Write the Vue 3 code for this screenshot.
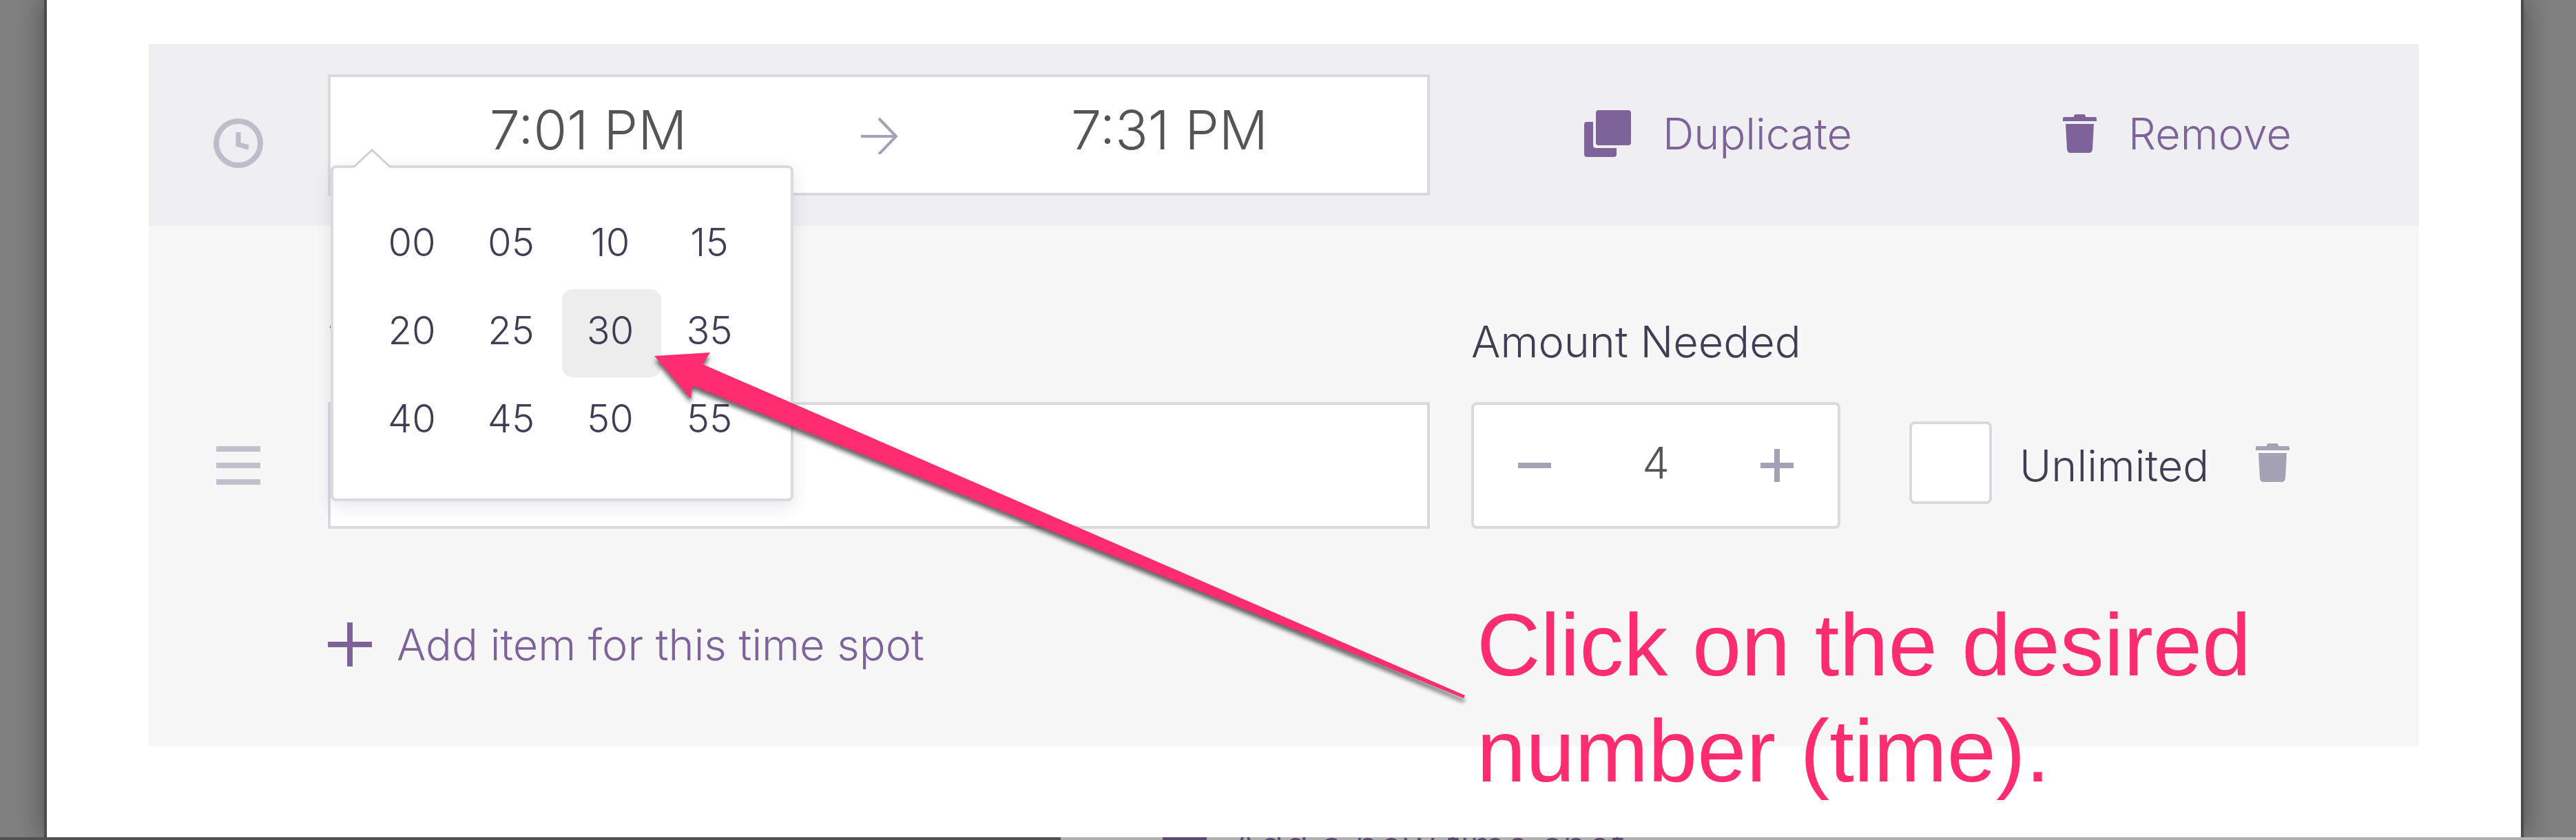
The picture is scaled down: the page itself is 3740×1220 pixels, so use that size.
<template>
  <div class="page">
    <main class="dialog">
      <section class="slot">
        <div class="slot-header">
          <div class="gutter clock">
            <svg width="72" height="72" viewBox="0 0 72 72" aria-hidden="true">
              <circle cx="36" cy="36" r="32" fill="none" stroke="#bfbdc9" stroke-width="8" />
              <path d="M36 20v18l15 4" fill="none" stroke="#bfbdc9" stroke-width="7" />
            </svg>
          </div>

          <div class="time-range">
            <input v-model="start" class="time" type="text" aria-label="Start time">
            <svg class="range-arrow" width="96" height="56" viewBox="0 0 96 56" aria-hidden="true">
              <path d="M22 30h50M48 4l25 26l-25 26" fill="none" stroke="#a5a1b5" stroke-width="4" />
            </svg>
            <input v-model="end" class="time" type="text" aria-label="End time">

            <div class="minutes">
              <svg class="caret" width="56" height="28" viewBox="0 0 56 28" aria-hidden="true">
                <path d="M0 28L28 2L56 28z" fill="#fff" />
                <path d="M1 27L28 2L55 27" fill="none" stroke="#cfcfcf" stroke-width="3" />
              </svg>
              <button
                v-for="m in minutes"
                :key="m"
                type="button"
                class="minute"
                :class="{ active: m === hovered }"
                @mouseenter="hovered = m"
                @click="pick(m)"
              >{{ m }}</button>
            </div>
          </div>

          <div class="actions">
            <button type="button" class="action">
              <svg width="68" height="68" viewBox="0 0 68 68" fill="#7d6399" aria-hidden="true">
                <rect x="17" y="0" width="51" height="51" rx="4" />
                <path d="M4 17h9v34a4 4 0 0 0 4 4h30v9a4 4 0 0 1-4 4H4a4 4 0 0 1-4-4V21a4 4 0 0 1 4-4z" />
              </svg>
              Duplicate
            </button>
            <button type="button" class="action">
              <svg width="49" height="56" viewBox="0 0 49 56" fill="#7d6399" aria-hidden="true">
                <path :d="trash" />
              </svg>
              Remove
            </button>
          </div>
        </div>

        <div class="slot-body">
          <div class="item">
            <div class="gutter handle">
              <svg width="64" height="56" viewBox="0 0 64 56" fill="#c1bfcb" aria-hidden="true">
                <path d="M0 0h64v8H0zM0 24h64v8H0zM0 48h64v8H0z" />
              </svg>
            </div>

            <div class="field title-field">
              <label for="title">Title</label>
              <input id="title" v-model="title" class="title" type="text">
            </div>

            <div class="field amount-field">
              <label for="amount">Amount Needed</label>
              <div class="stepper">
                <button type="button" aria-label="Less" @click="amount = Math.max(1, amount - 1)">
                  <svg width="48" height="48" viewBox="0 0 48 48" fill="#a5a1b5"><path d="M0 20h48v8H0z" /></svg>
                </button>
                <input id="amount" v-model.number="amount" type="text">
                <button type="button" aria-label="More" @click="amount++">
                  <svg width="48" height="48" viewBox="0 0 48 48" fill="#a5a1b5"><path d="M0 20h20V0h8v20h20v8H28v20h-8V28H0z" /></svg>
                </button>
              </div>
            </div>

            <div class="extras">
              <input id="unlimited" v-model="unlimited" type="checkbox">
              <label for="unlimited">Unlimited</label>
              <button type="button" class="delete" aria-label="Delete item">
                <svg width="49" height="56" viewBox="0 0 49 56" fill="#a5a1b5">
                  <path :d="trash" />
                </svg>
              </button>
            </div>
          </div>

          <button type="button" class="add">
            <svg width="64" height="64" viewBox="0 0 64 64" fill="#7d6399" aria-hidden="true">
              <path d="M0 28h28V0h8v28h28v8H36v28h-8V36H0z" />
            </svg>
            Add item for this time spot
          </button>
        </div>
      </section>

      <!-- callout pointing at the highlighted minute -->
      <svg class="pointer" width="1192" height="520" viewBox="0 0 1192 520" aria-hidden="true">
        <path d="M6 7L87 2L76 19L1183 500L1181 504L61 50L59 69z" fill="#ff2d6f" />
      </svg>
      <p class="callout">Click on the desired<br>number (time).</p>
    </main>

    <!-- sliver of the page behind the dialog -->
    <footer class="behind">
      <div class="behind-shade"></div>
      <div class="behind-link">
        <span class="behind-plus"></span>
        <span>Add a new time spot</span>
      </div>
    </footer>
  </div>
</template>

<script setup>
import { ref } from 'vue';

const start = ref('7:01 PM');
const end = ref('7:31 PM');
const title = ref('');
const amount = ref(4);
const unlimited = ref(false);
const hovered = ref('30');

const minutes = ['00', '05', '10', '15', '20', '25', '30', '35', '40', '45', '50', '55'];

const trash = 'M2 4h14q0-4 3-4h11q3 0 3 4h14q2 0 2 2v4H0V6q0-2 2-2zM4 14h41l-2 37q-1 5-5 5H11q-4 0-5-5z';

const pick = (m) => {
  start.value = start.value.replace(/:\d\d/, ':' + m);
};
</script>

<style>
body {
  background: #808080;
}
</style>

<style scoped>
.page {
  font-family: Inter, "Liberation Sans", sans-serif;
  font-weight: 300;
  font-size: 63px;
  line-height: 80px;
  color: #423c54;
  overflow: hidden;
}
.page * {
  box-sizing: border-box;
}
button,
input {
  font: inherit;
  color: inherit;
  margin: 0;
  padding: 0;
  border: 0;
  background: none;
}
button {
  cursor: pointer;
}
svg {
  display: block;
  flex: none;
}
.dialog {
  position: relative;
  margin: 0 80px 0 68px;
  padding: 64px 148px 132px;
  background: #fff;
  box-shadow: 0 0 0 4px #4b4b4b, 0 0 40px 4px rgba(0, 0, 0, 0.4);
}
.slot {
  background: #f7f7f7;
}
.slot-header {
  display: flex;
  padding: 44px 184px 44px 0;
  background: #efeff2;
}
.gutter {
  flex: none;
  width: 260px;
  display: flex;
  justify-content: center;
  align-items: center;
}
.clock {
  padding-top: 24px;
}
.time-range {
  position: relative;
  flex: 1;
  min-width: 0;
  height: 176px;
  display: flex;
  align-items: center;
  border: 4px solid #dad9e0;
  background: #fff;
}
.time {
  flex: 1;
  min-width: 0;
  height: 100%;
  padding-bottom: 16px;
  font-size: 79px;
  text-align: center;
  color: #555;
}
.minutes {
  position: absolute;
  z-index: 1;
  top: 128px;
  left: 0;
  width: 672px;
  padding: 48px 44px;
  display: grid;
  grid-template-columns: repeat(4, 144px);
  grid-auto-rows: 128px;
  border: 4px solid #dad9e0;
  border-radius: 8px;
  background: #fff;
  box-shadow: 0 8px 24px rgba(66, 60, 84, 0.12);
}
.caret {
  position: absolute;
  top: -28px;
  left: 28px;
}
.minute {
  padding: 0 4px 8px 0;
  font-size: 56px;
  border-radius: 16px;
}
.minute.active {
  background: #ededed;
}
.actions {
  flex: none;
  width: 1252px;
  padding: 0 0 4px 224px;
  display: grid;
  grid-template-columns: 695px 1fr;
  align-items: center;
}
.action,
.add {
  display: flex;
  align-items: center;
  color: #7d6399;
  text-align: left;
  white-space: nowrap;
}
.action {
  gap: 46px;
}
.slot-body {
  padding: 128px 188px 108px 0;
}
.item {
  display: flex;
  align-items: flex-end;
}
.handle {
  height: 184px;
}
.field {
  display: flex;
  flex-direction: column;
  gap: 48px;
}
.title-field {
  flex: 1;
  min-width: 0;
}
.title {
  height: 184px;
  padding: 0 40px;
  border: 4px solid #dad9e0;
  background: #fff;
}
.amount-field {
  flex: none;
  width: 536px;
  margin-left: 60px;
}
.stepper {
  height: 184px;
  padding: 0 64px;
  display: flex;
  align-items: center;
  border: 4px solid #dad9e0;
  border-radius: 8px;
  background: #fff;
}
.stepper input {
  flex: 1;
  min-width: 0;
  padding-bottom: 8px;
  text-align: center;
  color: #555;
}
.extras {
  flex: none;
  width: 552px;
  height: 184px;
  margin-left: 100px;
  padding-bottom: 8px;
  display: flex;
  align-items: center;
}
.extras input {
  appearance: none;
  width: 120px;
  height: 120px;
  margin-right: 40px;
  border: 4px solid #dad9e0;
  border-radius: 8px;
  background: #fff;
}
.extras label {
  padding-top: 8px;
}
.delete {
  margin-left: auto;
}
.add {
  margin: 128px 0 0 260px;
  gap: 36px;
}
.pointer {
  position: absolute;
  z-index: 2;
  top: 510px;
  left: 876px;
  filter: drop-shadow(0 6px 3px rgba(0, 0, 0, 0.6));
}
.callout {
  position: absolute;
  z-index: 2;
  top: 860px;
  left: 2076px;
  margin: 0;
  font-family: "Liberation Sans", Helvetica, sans-serif;
  font-weight: 400;
  font-size: 128px;
  line-height: 154px;
  color: #ff2d6f;
  white-space: nowrap;
}
.behind {
  position: relative;
  height: 4px;
  display: flex;
  overflow: hidden;
  background: #b0b0b0;
}
.behind-shade {
  flex: none;
  width: 1540px;
  background: #505252;
}
.behind-link {
  display: flex;
  gap: 36px;
  padding-left: 148px;
  font-size: 60px;
  line-height: 24px;
  color: #5a4a70;
  white-space: nowrap;
}
.behind-plus {
  width: 64px;
  height: 4px;
  background: #5a4a70;
}
</style>
